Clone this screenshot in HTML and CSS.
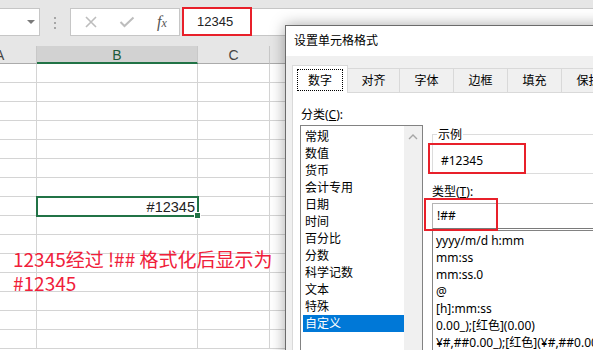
FILE: index.html
```html
<!DOCTYPE html>
<html>
<head>
    <title>设置单元格格式</title>
    <link rel="stylesheet" href="styles.css">
</head>
<body>
    <div class="screen">
        <!-- Formula bar -->
        <div class="toolbar">
            <div class="name-box"><span class="drop-arrow"></span></div>
            <div class="grip"><i></i><i></i><i></i></div>
            <div class="fx-buttons">
                <svg class="tool-icon" width="14" height="12" viewBox="0 0 14 12">
                    <path d="M2 1 L12 11 M12 1 L2 11" stroke="#bdbdbd" stroke-width="1.6" fill="none"/>
                </svg>
                <svg class="tool-icon" width="16" height="12" viewBox="0 0 16 12">
                    <path d="M1.5 6 L5.5 10 L14.5 1.5" stroke="#bdbdbd" stroke-width="2" fill="none"/>
                </svg>
                <span class="fx">f<small>x</small></span>
            </div>
            <div class="formula-input">
                <span class="mark">12345</span>
            </div>
        </div>

        <!-- Worksheet -->
        <div class="sheet">
            <div class="col-head">A</div>
            <div class="col-head active">B</div>
            <div class="col-head">C</div>
            <div class="col-head"></div>
        </div>
        <div class="sheet" id="rows">
            <!-- rows are inserted by the script below -->
        </div>

        <div class="note">12345经过 !## 格式化后显示为<br>#12345</div>

        <!-- Format Cells dialog -->
        <div class="dialog">
            <div class="dialog-title">设置单元格格式</div>
            <div class="dialog-body">
                <div class="tabs">
                    <div class="tab selected"><span class="focus">数字</span></div>
                    <div class="tab">对齐</div>
                    <div class="tab">字体</div>
                    <div class="tab">边框</div>
                    <div class="tab">填充</div>
                    <div class="tab">保护</div>
                </div>
                <div class="panel">
                    <div class="left-col">
                        <div class="label">分类(<u>C</u>):</div>
                        <div class="category-list">
                            <ul class="items" id="categories"></ul>
                            <div class="scrollbar">
                                <svg width="10" height="6" viewBox="0 0 10 6">
                                    <path d="M1 5 L5 1 L9 5" stroke="#a6a6a6" stroke-width="1.4" fill="none"/>
                                </svg>
                            </div>
                        </div>
                    </div>
                    <div class="right-col">
                        <div class="sample-box">
                            <span class="legend">示例</span>
                            <div class="sample-text">#12345</div>
                            <div class="highlight sample-mark"></div>
                        </div>
                        <div class="label type-label">类型(<u>T</u>):</div>
                        <div class="type-input">
                            !##
                            <div class="highlight input-mark"></div>
                        </div>
                        <ul class="format-list">
                            <li>yyyy/m/d h:mm</li>
                            <li>mm:ss</li>
                            <li>mm:ss.0</li>
                            <li>@</li>
                            <li>[h]:mm:ss</li>
                            <li>0.00_);[红色](0.00)</li>
                            <li>¥#,##0.00_);[红色](¥#,##0.00)</li>
                        </ul>
                    </div>
                </div>
            </div>
        </div>
    </div>

    <script>
        // Build the worksheet grid
        const rows = document.getElementById('rows');
        for (let r = 0; r < 15; r++) {
            for (let c = 0; c < 4; c++) {
                const cell = document.createElement('div');
                cell.classList.add('cell');
                if (r === 7 && c === 1) {
                    cell.classList.add('selected');
                    cell.innerText = '#12345';
                }
                rows.appendChild(cell);
            }
        }

        // Category list
        const categories = ['常规', '数值', '货币', '会计专用', '日期', '时间', '百分比', '分数', '科学记数', '文本', '特殊', '自定义'];
        const list = document.getElementById('categories');
        categories.forEach((name, index) => {
            const li = document.createElement('li');
            li.innerText = name;
            if (index === categories.length - 1) {
                li.classList.add('current');
            }
            list.appendChild(li);
        });
    </script>
</body>
</html>
```

FILE: styles.css
```css
/* General Styles */
body {
    margin: 0;
    padding: 0;
    font-family: "Noto Sans", "Noto Sans CJK SC", sans-serif;
    font-size: 12px;
    color: #000;
    background-color: #fff;
}
.screen {
    position: relative;
    width: 593px;
    height: 350px;
    overflow: hidden;
}
ul {
    list-style: none;
    margin: 0;
    padding: 0;
}
/* Formula bar */
.toolbar {
    display: flex;
    height: 46px;
    padding-top: 8px;
    box-sizing: border-box;
    background-color: #e6e6e6;
}
.name-box {
    position: relative;
    width: 40px;
    height: 28px;
    box-sizing: border-box;
    background-color: #fff;
    border: 1px solid #c6c6c6;
    border-left: none;
}
.drop-arrow {
    position: absolute;
    left: 27px;
    top: 11px;
    border-left: 4px solid transparent;
    border-right: 4px solid transparent;
    border-top: 4px solid #7a7a7a;
}
.grip {
    display: flex;
    flex-direction: column;
    gap: 3px;
    width: 30px;
    padding: 9px 0 0 14px;
    box-sizing: border-box;
}
.grip i {
    width: 2px;
    height: 2px;
    background-color: #a6a6a6;
}
.fx-buttons {
    display: flex;
    align-items: center;
    width: 110px;
    height: 28px;
    box-sizing: border-box;
    padding-left: 13px;
    background-color: #fff;
    border: 1px solid #c6c6c6;
}
.tool-icon {
    margin-right: 21px;
}
.tool-icon + .tool-icon {
    margin-right: 22px;
}
.fx {
    font-family: "Liberation Serif", serif;
    font-style: italic;
    font-size: 16px;
    color: #555;
    line-height: 1;
}
.fx small {
    font-size: 12px;
}
.formula-input {
    flex: 1;
    height: 28px;
    margin-left: 2px;
    box-sizing: border-box;
    background-color: #fff;
    border: 1px solid #c6c6c6;
    border-right: none;
}
.formula-input .mark {
    display: block;
    width: 70px;
    height: 29px;
    margin: -2px 0 0 -1px;
    padding-left: 13px;
    box-sizing: border-box;
    border: 2px solid #e8202a;
    font-family: "Liberation Sans", sans-serif;
    font-size: 13px;
    line-height: 25px;
    color: #222;
}
/* Worksheet */
.sheet {
    display: grid;
    grid-template-columns: 37px 161px 72px 1fr;
}
.col-head {
    height: 18px;
    box-sizing: border-box;
    background-color: #e6e6e6;
    border-right: 1px solid #c8c8c8;
    border-bottom: 1px solid #ababab;
    font-family: "Liberation Sans", sans-serif;
    font-size: 14px;
    line-height: 19px;
    text-align: center;
    color: #444;
}
.col-head:first-child {
    text-align: left;
    text-indent: -5px;
}
.col-head.active {
    background-color: #d2d2d2;
    color: #1e5c3a;
    border-bottom: 2px solid #217346;
}
.cell {
    height: 19px;
    box-sizing: border-box;
    border-right: 1px solid #d4d4d4;
    border-bottom: 1px solid #d4d4d4;
}
.cell.selected {
    position: relative;
    outline: 2px solid #217346;
    outline-offset: -1px;
    padding-right: 2px;
    font-family: "Liberation Sans", sans-serif;
    font-size: 14.5px;
    line-height: 20px;
    text-align: right;
    color: #222;
}
.cell.selected::after {
    content: "";
    position: absolute;
    right: -4px;
    bottom: -4px;
    width: 5px;
    height: 5px;
    background-color: #217346;
    border: 1px solid #fff;
}
.note {
    position: absolute;
    left: 13px;
    top: 247px;
    font-family: "Noto Sans CJK SC", sans-serif;
    font-size: 19px;
    line-height: 24px;
    color: #f0203a;
}
/* Dialog */
.dialog {
    position: absolute;
    left: 285px;
    top: 25px;
    width: 340px;
    height: 340px;
    background-color: #f0f0f0;
    border: 1px solid #6b6b6b;
    box-shadow: 0 0 14px rgba(0, 0, 0, 0.35);
}
.dialog-title {
    height: 30px;
    padding-left: 8px;
    line-height: 30px;
    background-color: #fff;
}
.dialog-body {
    padding: 9px 0 0 6px;
}
.tabs {
    display: flex;
    align-items: flex-end;
}
.tab {
    width: 54px;
    height: 24px;
    box-sizing: border-box;
    border: 1px solid #d9d9d9;
    border-left: none;
    border-bottom: none;
    text-align: center;
    line-height: 23px;
}
.tab.selected {
    width: 56px;
    height: 28px;
    padding: 3px 4px 0;
    margin-bottom: -1px;
    background-color: #fff;
    border-left: 1px solid #d9d9d9;
    position: relative;
}
.tab:nth-child(2) {
    width: 52px;
}
.focus {
    display: block;
    height: 22px;
    border: 1px dotted #000;
    line-height: 21px;
    box-sizing: border-box;
}
.panel {
    display: flex;
    gap: 9px;
    height: 260px;
    padding: 13px 0 0 7px;
    background-color: #fff;
    border-top: 1px solid #d9d9d9;
    border-left: 1px solid #d9d9d9;
}
.label {
    line-height: 17px;
    padding-left: 1px;
}
.left-col {
    width: 123px;
}
.category-list {
    display: flex;
    height: 240px;
    margin-top: 2px;
    box-sizing: border-box;
    border: 1px solid #828282;
}
.category-list .items {
    flex: 1;
    padding: 2px 0 0 2px;
}
.category-list li {
    padding-left: 2px;
    line-height: 17px;
}
.category-list li.current {
    background-color: #0078d7;
    color: #fff;
}
.scrollbar {
    width: 18px;
    background-color: #f0f0f0;
    text-align: center;
    padding-top: 8px;
    box-sizing: border-box;
}
.scrollbar svg {
    display: block;
    margin: 0 auto;
}
.right-col {
    flex: 1;
    padding-top: 28px;
}
.sample-box {
    position: relative;
    height: 40px;
    box-sizing: border-box;
    border: 1px solid #dcdcdc;
    border-right: none;
}
.legend {
    position: absolute;
    left: 4px;
    top: -9px;
    padding: 0 1px;
    line-height: 17px;
    background-color: #fff;
}
.sample-text {
    padding: 17px 0 0 8px;
    line-height: 17px;
}
.highlight {
    position: absolute;
    box-sizing: border-box;
    border: 2px solid #e8202a;
}
.sample-mark {
    left: -5px;
    top: 8px;
    width: 98px;
    height: 31px;
}
.type-label {
    margin: 9px 0 3px;
    padding-left: 0;
}
.type-input {
    position: relative;
    height: 26px;
    padding-left: 4px;
    box-sizing: border-box;
    border: 1px solid #b4b4b4;
    border-bottom-color: #7a7a7a;
    border-right: none;
    line-height: 24px;
}
.input-mark {
    left: -9px;
    top: -6px;
    width: 74px;
    height: 33px;
}
.format-list {
    height: 140px;
    margin-top: 1px;
    padding-top: 1px;
    border: 1px solid #828282;
    border-right: none;
}
.format-list li {
    padding-left: 3px;
    line-height: 17px;
    white-space: nowrap;
}
```
